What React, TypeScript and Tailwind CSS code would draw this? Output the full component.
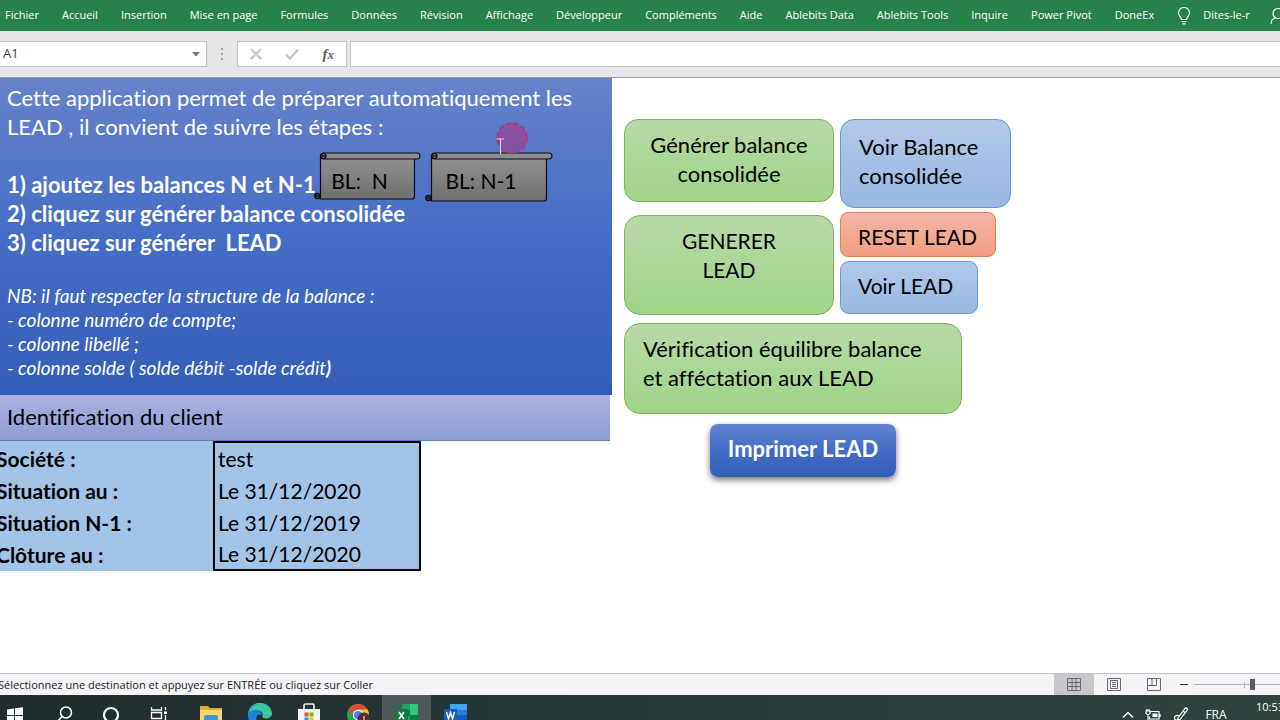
import type { ReactNode } from "react";

const ribbonTabs = [
  "Fichier",
  "Accueil",
  "Insertion",
  "Mise en page",
  "Formules",
  "Données",
  "Révision",
  "Affichage",
  "Développeur",
  "Compléments",
  "Aide",
  "Ablebits Data",
  "Ablebits Tools",
  "Inquire",
  "Power Pivot",
  "DoneEx",
];

const clientRows = [
  { label: "Société :", value: "test" },
  { label: "Situation au :", value: "Le 31/12/2020" },
  { label: "Situation N-1 :", value: "Le 31/12/2019" },
  { label: "Clôture au :", value: "Le 31/12/2020" },
];

function Ribbon() {
  return (
    <nav className="flex h-[31px] shrink-0 items-center overflow-hidden bg-[#26814a] pl-[5px] text-[11px] whitespace-nowrap text-white">
      <div className="flex gap-[23px]">
        {ribbonTabs.map((tab) => (
          <button key={tab} type="button">
            {tab}
          </button>
        ))}
      </div>
      <svg className="ml-[23px] h-[18px] w-[14px] shrink-0" viewBox="0 0 14 18" fill="none" stroke="white" strokeWidth="1.2">
        <path d="M4.5 12.5c0-2.2-3-3.4-3-6.500a5.500 5.500 0 0 1 11 0c0 3.100-3 4.300-3 6.500zM4.500 14.700h5M5.500 16.800h3" />
      </svg>
      <button type="button" className="ml-3">
        Dites-le-r
      </button>
      <svg className="ml-5 h-[18px] w-[18px] shrink-0" viewBox="0 0 18 18" fill="none" stroke="white" strokeWidth="1.2">
        <circle cx="8" cy="6.500" r="5" />
        <path d="M1 17c0-3.500 2-5.500 4.500-6.300M10.500 10.700c2.500.8 4.500 2.800 4.500 6.300" />
      </svg>
    </nav>
  );
}

function FormulaBar() {
  return (
    <div className="flex h-[47px] shrink-0 items-center border-b border-[#9b9a9f] bg-[#e7e5e8] text-[13px]">
      <div className="flex h-[26px] w-[207px] items-center border border-l-0 border-[#c3c1c6] bg-white">
        <input aria-label="Zone Nom" defaultValue="A1" className="min-w-0 flex-1 pl-[3px] text-[#444] outline-none" />
        <button type="button" aria-label="Noms" className="px-[6px]">
          <svg className="h-[5px] w-[8px]" viewBox="0 0 8 5">
            <path d="M0 0h8L4 4.500z" fill="#767676" />
          </svg>
        </button>
      </div>
      <svg className="mx-[13px] h-3 w-1 shrink-0" viewBox="0 0 4 12" fill="#a5a4a8">
        <path d="M1 0h2v2H1zM1 5h2v2H1zM1 10h2v2H1z" />
      </svg>
      <div className="flex h-[26px] w-[110px] items-center justify-between border border-[#c3c1c6] bg-white px-3">
        <button type="button" aria-label="Annuler">
          <svg className="h-[12px] w-[12px]" viewBox="0 0 12 12" stroke="#c4c3c7" strokeWidth="2">
            <path d="M1 1l10 10M11 1L1 11" />
          </svg>
        </button>
        <button type="button" aria-label="Entrer">
          <svg className="h-[12px] w-[14px]" viewBox="0 0 14 12" fill="none" stroke="#c4c3c7" strokeWidth="2.400">
            <path d="M1 6.500l4 4L13 1.500" />
          </svg>
        </button>
        <button type="button" className="font-['Liberation_Serif',serif] text-[15px] leading-4 font-bold text-[#5c5b60] italic">
          f<span className="text-[13px]">x</span>
        </button>
      </div>
      <input
        aria-label="Barre de formule"
        className="ml-[3px] h-[26px] min-w-0 flex-1 border border-r-0 border-[#c3c1c6] bg-white outline-none"
      />
    </div>
  );
}

function ScrollButton({ width, height, className, children }: { width: number; height: number; className: string; children: ReactNode }) {
  const right = width - 6;
  const bottom = height - 1;
  const id = `scroll-${width}`;
  return (
    <button type="button" className={`absolute ${className}`}>
      <svg className="block" width={width} height={height} viewBox={`0 0 ${width} ${height}`} stroke="#0c0c10" strokeWidth="1.2">
        <defs>
          <linearGradient id={id} x1="0" y1="0" x2="0" y2="1">
            <stop offset="0" stopColor="#929292" />
            <stop offset="1" stopColor="#6f6f6f" />
          </linearGradient>
        </defs>
        <path d={`M6.500 4V${bottom}H${right - 3}q2.500 0 2.500 -2.500V6z`} fill={`url(#${id})`} />
        <rect x="6.500" y="1" width={width - 7.5} height="6" rx="3" fill="#8d8d8f" />
        <circle cx="9.500" cy="4" r="2.500" fill="#777" />
        <path d="M8 4h4" />
        <circle cx="3.500" cy={bottom - 3} r="2.700" fill="#444" />
        <path d={`M1 ${bottom - 3}h5.500`} />
      </svg>
      <span className="absolute inset-x-0 top-[14px] pr-4 text-center text-[21px] whitespace-pre text-black">{children}</span>
    </button>
  );
}

function Instructions() {
  return (
    <section className="relative h-[317px] bg-linear-to-b from-[#6682ca] via-[#446dc6] to-[#335eb6] px-[7px] pt-[5px] text-white">
      <p>
        Cette application permet de préparer automatiquement les
        <br />
        LEAD , il convient de suivre les étapes :
      </p>
      <ol className="mt-[29px] font-bold whitespace-pre">
        <li>1) ajoutez les balances N et N-1</li>
        <li>2) cliquez sur générer balance consolidée</li>
        <li>3) cliquez sur générer{"  "}LEAD</li>
      </ol>
      <div className="mt-[27px] text-[19px] leading-6 italic">
        <p>NB: il faut respecter la structure de la balance :</p>
        <p>- colonne numéro de compte;</p>
        <p>- colonne libellé ;</p>
        <p>
          - colonne solde ( solde débit -solde crédit<b>)</b>
        </p>
      </div>
      <ScrollButton width={107} height={48} className="top-[74px] left-[314px]">
        BL:{"  "}N
      </ScrollButton>
      <ScrollButton width={128} height={50} className="top-[74px] left-[425px]">
        BL: N-1
      </ScrollButton>
      <svg className="absolute top-[42px] left-[494px] h-9 w-9" viewBox="0 0 36 36" fill="none">
        <circle cx="18" cy="18" r="15" fill="#8d4c9c" fillOpacity=".9" stroke="#c22a6c" strokeWidth="1.500" strokeDasharray="5 3" />
        <path d="M3 19h7M6.500 19v15" stroke="#d8d8d0" />
      </svg>
    </section>
  );
}

function ClientTable() {
  return (
    <table className="-ml-1 w-[425px] border-collapse bg-[#a1c4e7] text-[21px] text-black">
      <tbody>
        {clientRows.map((row) => (
          <tr key={row.label} className="h-8">
            <th scope="row" className="w-[218px] p-0 text-left font-bold">
              {row.label}
            </th>
            <td className="border-x-2 border-black p-0 pl-[3px] [tr:first-child>&]:border-t-2 [tr:last-child>&]:border-b-2">
              {row.value}
            </td>
          </tr>
        ))}
      </tbody>
    </table>
  );
}

function MacroButtons() {
  const green = "border border-[#7fb25c] bg-linear-to-b from-[#b8d9a6] to-[#9fd587]";
  const blue = "border border-[#6b96cb] bg-linear-to-b from-[#b3c8e8] to-[#98b9e3]";
  return (
    <section className="flex flex-col items-start pt-[41px] pl-[12px] text-black">
      <div className="flex gap-[6px]">
        <div className="flex flex-col gap-[13px]">
          <button type="button" className={`h-[83px] w-[210px] rounded-[14px] px-4 pb-1 ${green}`}>
            Générer balance consolidée
          </button>
          <button type="button" className={`h-[100px] w-[210px] rounded-[16px] px-14 pb-5 text-[21px] ${green}`}>
            GENERER LEAD
          </button>
        </div>
        <div className="flex flex-col items-start gap-[4px]">
          <button type="button" className={`h-[89px] w-[171px] rounded-[14px] pr-4 pb-[6px] pl-[18px] text-left ${blue}`}>
            Voir Balance consolidée
          </button>
          <button
            type="button"
            className="h-[45px] w-[156px] rounded-[8px] border border-[#dd7f52] bg-linear-to-b from-[#f4b5a4] to-[#f19f82] pt-1 pl-[17px] text-left text-[21px]"
          >
            RESET LEAD
          </button>
          <button type="button" className={`h-[53px] w-[138px] rounded-[9px] pb-1 pl-[17px] text-left text-[21px] ${blue}`}>
            Voir LEAD
          </button>
        </div>
      </div>
      <button type="button" className={`mt-[8px] h-[91px] w-[338px] rounded-[16px] px-[18px] pb-3 text-left ${green}`}>
        Vérification équilibre balance
        <br />
        et afféctation aux LEAD
      </button>
      <button
        type="button"
        className="mt-[10px] ml-[86px] h-[53px] w-[186px] rounded-[8px] bg-linear-to-b from-[#5f83d0] via-[#426cc6] to-[#345fb8] pb-1 font-bold text-white shadow-[0_3px_6px_rgba(0,0,0,0.55)]"
      >
        Imprimer LEAD
      </button>
    </section>
  );
}

function StatusBar() {
  return (
    <footer className="flex h-[22px] shrink-0 items-center justify-between overflow-hidden border-t border-[#c8c4ce] bg-[#f5f3f6] whitespace-nowrap">
      <p className="-ml-[2px] pt-px text-[11px] text-[#222]">Sélectionnez une destination et appuyez sur ENTRÉE ou cliquez sur Coller</p>
      <div className="-mr-[14px] flex h-full shrink-0 items-center">
        <button type="button" aria-label="Normal" className="grid h-full w-10 place-items-center bg-[#c9c7ca]">
          <svg className="h-[14px] w-[14px]" viewBox="0 0 14 14" fill="none" stroke="#6a696d">
            <path d="M.5 .5h13v12H.5zM.5 4.500h13M.5 8.500h13M5 .5v12M9 .5v12" />
          </svg>
        </button>
        <button type="button" aria-label="Mise en page" className="grid h-full w-10 place-items-center">
          <svg className="h-[14px] w-[14px]" viewBox="0 0 14 14" fill="none" stroke="#6a696d">
            <path d="M.5 .5h13v12H.5zM3.500 2.500h7v8h-7zM5 4.500h4M5 6.500h4M5 8.500h4" />
          </svg>
        </button>
        <button type="button" aria-label="Sauts de page" className="grid h-full w-10 place-items-center">
          <svg className="h-[14px] w-[14px]" viewBox="0 0 14 14" fill="none" stroke="#6a696d">
            <path d="M.5 .5h13v12H.5zM5 .5v7M9.500 .5v7M.5 7.500h9" />
          </svg>
        </button>
        <button type="button" aria-label="Zoom arrière" className="grid h-full w-5 place-items-center">
          <span className="h-px w-2 bg-[#333]" />
        </button>
        <input
          type="range"
          aria-label="Zoom"
          defaultValue={59}
          className="h-3 w-[100px] appearance-none bg-[linear-gradient(#b5b3b8,#b5b3b8),linear-gradient(#b5b3b8,#b5b3b8)] bg-[length:100%_1px,1px_6px] bg-center bg-no-repeat [&::-webkit-slider-thumb]:h-[11px] [&::-webkit-slider-thumb]:w-[5px] [&::-webkit-slider-thumb]:appearance-none [&::-webkit-slider-thumb]:bg-[#5c5b5f]"
        />
      </div>
    </footer>
  );
}

function TaskButton({ label, active, children }: { label: string; active?: boolean; children: ReactNode }) {
  return (
    <button type="button" aria-label={label} className={`grid h-full w-[49px] shrink-0 place-items-center ${active ? "bg-[#4b5958]" : ""}`}>
      <svg className="h-6 w-6" viewBox="0 0 24 24" fill="none">
        {children}
      </svg>
    </button>
  );
}

function Taskbar() {
  return (
    <div className="h-[25px] shrink-0 overflow-hidden bg-linear-to-r from-[#1f2c2e] to-[#30433f] text-white">
      <div className="flex h-10 items-center justify-between">
        <div className="-ml-[10px] flex h-full">
          <TaskButton label="Démarrer">
            <path d="M4 6.500l7-1V12H4zM12 5.300l8-1.100V12h-8zM4 13h7v6.500l-7-1zM12 13h8v7.800l-8-1.100z" fill="white" />
          </TaskButton>
          <TaskButton label="Rechercher">
            <circle cx="14" cy="9.500" r="5.500" stroke="white" strokeWidth="1.500" />
            <path d="M10 13.500L4 20" stroke="white" strokeWidth="1.500" />
          </TaskButton>
          <TaskButton label="Cortana">
            <circle cx="10" cy="12" r="7" stroke="#f4f6f6" strokeWidth="2.200" />
          </TaskButton>
          <TaskButton label="Affichage des tâches">
            <path d="M1.500 4v3h10V4M1.500 9.500h10v6h-10zM1.500 21v-3h10v3M15.500 4v3M15.500 12v9" stroke="white" strokeWidth="1.300" />
            <path d="M14 8.500h3v2.500h-3z" fill="white" />
          </TaskButton>
          <TaskButton label="Explorateur">
            <path d="M1 3h8l2 2h12v16H1z" fill="#e3aa28" />
            <path d="M1 7h22v14H1z" fill="#ffd767" />
            <path d="M5 14q0-2 2-2h10q2 0 2 2v7h-4v-4H9v4H5z" fill="#3b97d5" />
          </TaskButton>
          <TaskButton label="Edge">
            <path d="M0 12C0 5 5 0 12 0s12 5 12 10.500c0 3.500-3 5-6 5-2.500 0-4-1-3.500-2.500 1-3-2-5.500-5-5.500C5 7.500 0 10 0 12z" fill="#3bc6a0" />
            <path d="M0 12C1 4 6 1 11 1c-5 1-9 4-9 8 2-2 6-3 9-1.500 2 1.500 3 3.500 2.500 5.500-1-2-4-2-5 1-1 4 3 8 8 8-10 4-17-3-16.500-10z" fill="#1687d8" />
          </TaskButton>
          <TaskButton label="Microsoft Store">
            <path d="M7 6V2.500Q7 1 8.500 1h7Q17 1 17 2.500V6" stroke="#f3f3f3" strokeWidth="1.600" />
            <path d="M1 6h22v15q0 2-2 2H3q-2 0-2-2z" fill="#f3f3f3" />
            <path d="M7.500 9.500h4v4h-4z" fill="#ed4c23" />
            <path d="M12.500 9.500h4v4h-4z" fill="#7db700" />
            <path d="M7.500 14.500h4v4h-4z" fill="#00a3ee" />
            <path d="M12.500 14.500h4v4h-4z" fill="#fdb800" />
          </TaskButton>
          <TaskButton label="Chrome">
            <circle cx="12" cy="12" r="11" fill="#2ca14d" />
            <path d="M2.500 6.500A11 11 0 0 1 21.500 6.500H12a5.500 5.500 0 0 0-5 7.500z" fill="#df4a3c" />
            <path d="M12 6.500h9.500A11 11 0 0 1 12 23l5-8.500z" fill="#f6c52c" />
            <circle cx="12" cy="12" r="5.200" fill="white" />
            <circle cx="12" cy="12" r="4.100" fill="#4284f0" />
            <circle cx="18" cy="16" r="6.500" fill="#51302b" />
            <path d="M18 13v4" stroke="#d5c2bd" strokeWidth="1.400" />
          </TaskButton>
          <TaskButton label="Excel" active>
            <path d="M7 1h8v22H7z" fill="#21a366" />
            <path d="M15 1h8v11h-8z" fill="#33c481" />
            <path d="M7 7h8v6H7z" fill="#107c41" />
            <path d="M15 12h8v11h-8z" fill="#107c41" />
            <path d="M0 6h13v13H0z" fill="#107c41" />
            <path d="M4 9l5 7M9 9l-5 7" stroke="white" strokeWidth="1.700" />
          </TaskButton>
          <TaskButton label="Word">
            <path d="M6 1h17v6H6z" fill="#41a5ee" />
            <path d="M6 7h17v5H6z" fill="#2b7cd3" />
            <path d="M6 12h17v11H6z" fill="#185abd" />
            <path d="M0 6h13v13H0z" fill="#185abd" />
            <path d="M2.500 9l2 7 2-6.500 2 6.500 2-7" stroke="white" strokeWidth="1.400" />
          </TaskButton>
        </div>
        <div className="-mr-[19px] flex h-full shrink-0 items-center text-[12px]">
          <svg className="h-[10px] w-3" viewBox="0 0 12 10" fill="none" stroke="white" strokeWidth="1.400">
            <path d="M1 7.500l5-5 5 5" />
          </svg>
          <svg className="ml-[11px] h-3 w-4" viewBox="0 0 16 12" fill="none" stroke="white" strokeWidth="1.200">
            <path d="M5.500 2.500H14V10H4.500V7.500M15 5v3" />
            <path d="M7.500 4.500h5V8h-5z" fill="white" stroke="none" />
            <path d="M1 2h4v2.500L3 6 1 4.500zM2 0v2M4 0v2M3 6v5" />
          </svg>
          <svg className="ml-3 h-[16px] w-4" viewBox="0 0 16 16" fill="none" stroke="white" strokeWidth="1.200">
            <path d="M5 11l7-9.500q1-1 2 0t0 2L7 12.500l-2.500.5zM10 4l2.500 2M6 8.500c-3-.5-5 1-4.500 3s3 2 4 .5M8 13.500c1 1.500 3 .5 4-.5" />
          </svg>
          <span className="ml-4">FRA</span>
          <div className="ml-[14px] text-right text-[11px] leading-[17px]">
            <div className="pr-[15px]">10:53</div>
            <div>09/04/2021</div>
          </div>
        </div>
      </div>
    </div>
  );
}

export default function App() {
  return (
    <div className="flex h-screen flex-col overflow-hidden bg-white font-['Open_Sans',sans-serif]">
      <Ribbon />
      <FormulaBar />
      <main className="flex min-h-0 flex-1 overflow-hidden font-[Lato,sans-serif] text-[22px] leading-[29px] [font-variant-ligatures:none]">
        <div className="w-[612px] shrink-0">
          <Instructions />
          <h2 className="mr-[2px] h-[46px] border-b border-[#5f7cc4] bg-linear-to-b from-[#abb1df] to-[#919dd5] pt-[7px] pl-[7px] text-black">
            Identification du client
          </h2>
          <ClientTable />
        </div>
        <MacroButtons />
      </main>
      <StatusBar />
      <Taskbar />
    </div>
  );
}
